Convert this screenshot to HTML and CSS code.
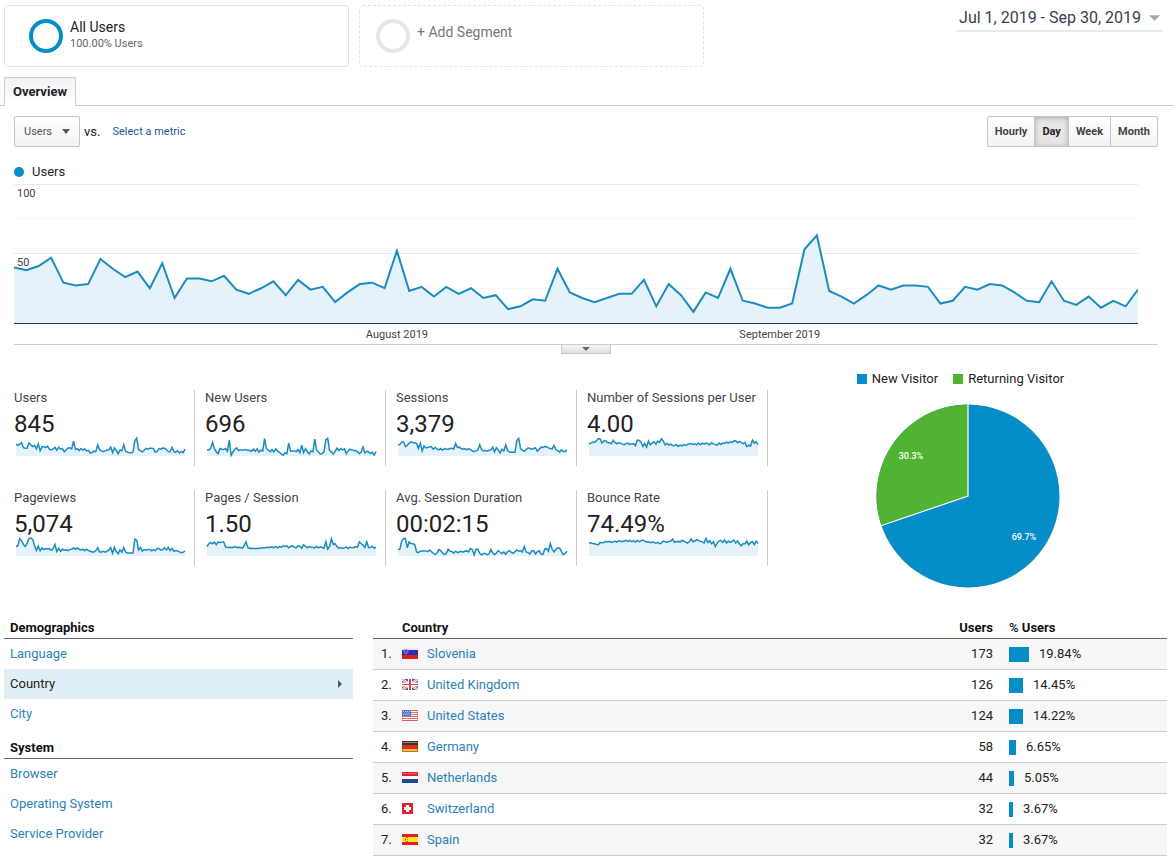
FILE: index.html
```html
<!DOCTYPE html>
<html lang="en">
<head>
<meta charset="utf-8">
<title>Audience Overview</title>
<link rel="stylesheet" href="styles.css">
</head>
<body>
<header class="topbar">
  <button class="segment" type="button">
    <span class="ring"></span>
    <span class="segment-text"><span class="segment-name">All Users</span><span class="segment-share">100.00% Users</span></span>
  </button>
  <button class="segment segment-add" type="button">
    <span class="ring ring-empty"></span>
    <span class="segment-hint">+ Add Segment</span>
  </button>
  <button class="date-range" type="button">Jul 1, 2019 - Sep 30, 2019
    <svg class="date-caret" viewBox="0 0 12 6"><path d="M0 0h12L6 6z"/></svg>
  </button>
</header>

<nav class="tabs"><button class="tab" type="button">Overview</button></nav>

<main>
  <section class="explorer">
    <div class="controls">
      <button class="metric" type="button">Users
        <svg class="metric-caret" viewBox="0 0 8 5"><path d="M0 0h8L4 5z"/></svg>
      </button>
      <span class="versus">vs.</span>
      <a class="metric-link" href="#">Select a metric</a>
      <div class="interval">
        <button type="button">Hourly</button><button type="button" class="active" aria-pressed="true">Day</button><button type="button">Week</button><button type="button">Month</button>
      </div>
    </div>
    <div class="series"><span class="dot"></span>Users</div>
    <div class="chart">
      <svg class="plot" viewBox="0 0 91 100" preserveAspectRatio="none" data-series="users" data-max="100"></svg>
      <span class="y-label y-top">100</span>
      <span class="y-label y-mid">50</span>
      <div class="x-axis">
        <span class="x-label x-aug">August 2019</span>
        <span class="x-label x-sep">September 2019</span>
      </div>
    </div>
    <div class="splitter">
      <button type="button" class="handle" aria-label="Collapse chart"><svg viewBox="0 0 8 4"><path d="M0 0h8L4 4z"/></svg></button>
    </div>
  </section>

  <section class="summary">
    <div class="stats">
      <div class="stat"><span class="stat-name">Users</span><strong>845</strong><svg class="spark" viewBox="0 0 91 53" preserveAspectRatio="none" data-series="users" data-max="63"></svg></div>
      <div class="stat"><span class="stat-name">New Users</span><strong>696</strong><svg class="spark" viewBox="0 0 91 53" preserveAspectRatio="none" data-series="newUsers" data-max="53"></svg></div>
      <div class="stat"><span class="stat-name">Sessions</span><strong>3,379</strong><svg class="spark" viewBox="0 0 91 53" preserveAspectRatio="none" data-series="sessions" data-max="53"></svg></div>
      <div class="stat"><span class="stat-name">Number of Sessions per User</span><strong>4.00</strong><svg class="spark" viewBox="0 0 91 53" preserveAspectRatio="none" data-series="perUser" data-max="53"></svg></div>
      <div class="stat"><span class="stat-name">Pageviews</span><strong>5,074</strong><svg class="spark" viewBox="0 0 91 53" preserveAspectRatio="none" data-series="pageviews" data-max="53"></svg></div>
      <div class="stat"><span class="stat-name">Pages / Session</span><strong>1.50</strong><svg class="spark" viewBox="0 0 91 53" preserveAspectRatio="none" data-series="pages" data-max="53"></svg></div>
      <div class="stat"><span class="stat-name">Avg. Session Duration</span><strong>00:02:15</strong><svg class="spark" viewBox="0 0 91 53" preserveAspectRatio="none" data-series="duration" data-max="53"></svg></div>
      <div class="stat"><span class="stat-name">Bounce Rate</span><strong>74.49%</strong><svg class="spark" viewBox="0 0 91 53" preserveAspectRatio="none" data-series="bounce" data-max="53"></svg></div>
    </div>
    <div class="visitors">
      <div class="pie-legend">
        <span class="key"><i class="swatch swatch-new"></i>New Visitor</span>
        <span class="key"><i class="swatch swatch-returning"></i>Returning Visitor</span>
      </div>
      <svg class="pie" viewBox="0 0 184 184">
        <circle cx="92" cy="92" r="91.5" fill="#058dc7"/>
        <path d="M92 92V.5A91.5 91.5 0 0 0 5.4 121.5Z" fill="#50b432"/>
        <path d="M92 0V92L5 121.700" fill="none" stroke="#fff" stroke-width="1.200"/>
        <text x="35" y="55">30.3%</text>
        <text x="148" y="136">69.7%</text>
      </svg>
    </div>
  </section>

  <section class="reports">
    <nav class="dimensions">
      <h2>Demographics</h2>
      <a href="#">Language</a>
      <a href="#" class="selected">Country<svg viewBox="0 0 4 8"><path d="M0 0l4 4-4 4z"/></svg></a>
      <a href="#">City</a>
      <h2>System</h2>
      <a href="#">Browser</a>
      <a href="#">Operating System</a>
      <a href="#">Service Provider</a>
    </nav>
    <table class="countries">
      <thead><tr><th class="rank"></th><th class="flag"></th><th class="country">Country</th><th class="count">Users</th><th class="share"><span class="percent">%</span> Users</th></tr></thead>
      <tbody>
        <tr><td class="rank">1.</td><td class="flag"><svg viewBox="0 0 16 11"><path fill="#e9e9fb" d="M0 0h16v3H0z"/><path fill="#2b2bbb" d="M0 2h16v5H0z"/><path fill="#e01b22" d="M0 7h16v4H0z"/><path fill="#4a50c8" stroke="#e8a0b0" stroke-width=".6" d="M2 1.500h4v3l-2 1.500-2-1.500z"/></svg></td><td class="country"><a href="#">Slovenia</a></td><td class="count">173</td><td class="share"><span class="meter"><i class="bar" style="width:20px"></i>19.84%</span></td></tr>
        <tr><td class="rank">2.</td><td class="flag"><svg viewBox="0 0 16 11"><path fill="#4a5aa0" d="M0 0h16v11H0z"/><path stroke="#fff" stroke-width="2.400" d="M0 0l16 11M16 0L0 11"/><path stroke="#d8606a" stroke-width=".8" d="M0 0l16 11M16 0L0 11"/><path stroke="#fff" stroke-width="4" d="M8 0v11M0 5.500h16"/><path stroke="#d8404e" stroke-width="2" d="M8 0v11"/><path stroke="#d8404e" d="M0 5.500h16"/></svg></td><td class="country"><a href="#">United Kingdom</a></td><td class="count">126</td><td class="share"><span class="meter"><i class="bar" style="width:14px"></i>14.45%</span></td></tr>
        <tr><td class="rank">3.</td><td class="flag"><svg viewBox="0 0 16 11"><path fill="#fff" d="M0 0h16v11H0z"/><path stroke="#e8696c" stroke-width="1.200" d="M0 .5h16M0 2.500h16M0 4.500h16M0 6.500h16M0 8.500h16M0 10.500h16"/><path fill="#3f78d8" d="M0 0h9v6H0z"/><path stroke="#cfe0ff" stroke-width=".8" stroke-dasharray="1 1" d="M1 1.500h7M2 3h6M1 4.500h7"/><path fill="none" stroke="#c0606a" stroke-opacity=".5" d="M.5.5h15v10H.5z"/></svg></td><td class="country"><a href="#">United States</a></td><td class="count">124</td><td class="share"><span class="meter"><i class="bar" style="width:14px"></i>14.22%</span></td></tr>
        <tr><td class="rank">4.</td><td class="flag"><svg viewBox="0 0 16 11"><path fill="#333" d="M0 0h16v4H0z"/><path fill="#888" d="M1 1h14v1H1z"/><path fill="#e62a22" d="M0 4h16v4H0z"/><path fill="#f8c03a" d="M0 8h16v3H0z"/><path fill="none" stroke="#5e3a12" stroke-opacity=".5" d="M.5.5h15v10H.5z"/></svg></td><td class="country"><a href="#">Germany</a></td><td class="count">58</td><td class="share"><span class="meter"><i class="bar" style="width:7px"></i>6.65%</span></td></tr>
        <tr><td class="rank">5.</td><td class="flag"><svg viewBox="0 0 16 11"><path fill="#e3202a" d="M0 0h16v4H0z"/><path fill="#f4686c" d="M1 1h14v1H1z"/><path fill="#fff" d="M0 4h16v3H0z"/><path fill="#1d4a9a" d="M0 7h16v4H0z"/></svg></td><td class="country"><a href="#">Netherlands</a></td><td class="count">44</td><td class="share"><span class="meter"><i class="bar" style="width:5px"></i>5.05%</span></td></tr>
        <tr><td class="rank">6.</td><td class="flag"><svg viewBox="0 0 16 11"><path fill="#e3202a" d="M0 0h11v11H0z"/><path fill="#fff" d="M4 2h3v2h2v3H7v2H4V7H2V4h2z"/></svg></td><td class="country"><a href="#">Switzerland</a></td><td class="count">32</td><td class="share"><span class="meter"><i class="bar" style="width:4px"></i>3.67%</span></td></tr>
        <tr><td class="rank">7.</td><td class="flag"><svg viewBox="0 0 16 11"><path fill="#e3202a" d="M0 0h16v11H0z"/><path fill="#fbe422" d="M0 3h16v5H0z"/><path fill="#d0702a" d="M4 3h2v1H4zM3 4h1v3H3zM5 5h1v1H5zM4 7h2v1H4z"/></svg></td><td class="country"><a href="#">Spain</a></td><td class="count">32</td><td class="share"><span class="meter"><i class="bar" style="width:4px"></i>3.67%</span></td></tr>
      </tbody>
    </table>
  </section>
</main>
<script src="charts.js"></script>
</body>
</html>
```

FILE: styles.css
```css
* { box-sizing: border-box; }
body { margin: 0; background: #fff; color: #222; font-family: Roboto, "Liberation Sans", sans-serif; font-size: 13px; line-height: 16px; }
button { font: inherit; color: inherit; background: none; border: 0; padding: 0; cursor: pointer; }
a { color: #2a83b8; text-decoration: none; }
svg { display: block; }

.topbar { display: flex; align-items: flex-start; gap: 10px; padding: 5px 11px 0 4px; }
.segment { display: flex; align-items: flex-start; gap: 7px; flex: 0 1 345px; height: 62px; padding: 13px 24px; border: 1px solid #e2e2e2; border-radius: 4px; text-align: left; }
.segment-add { padding: 13px 16px; border-style: dashed; color: #777; }
.ring { flex: none; width: 34px; height: 34px; border: 4px solid #058dc7; border-radius: 50%; }
.ring-empty { border-color: #e6e6e6; }
.segment-text { display: flex; flex-direction: column; }
.segment-name { font-size: 14px; }
.segment-share { font-size: 11px; line-height: 18px; color: #666; }
.segment-hint { font-size: 14px; line-height: 26px; }
.date-range { display: flex; align-items: center; gap: 8px; margin-left: auto; padding: 0 3px; height: 27px; border-bottom: 2px solid #eaeaea; color: #37404a; font-size: 16px; white-space: nowrap; }
.date-caret { width: 11px; height: 6px; fill: #aaa; }

.tabs { display: flex; margin-top: 10px; padding-left: 4px; border-bottom: 1px solid #ccc; }
.tab { height: 29px; margin-bottom: -1px; padding: 0 8px; border: 1px solid #ccc; border-bottom: 0; background: linear-gradient(#f3f3f3, #fff); font-weight: 700; }

.explorer { padding: 10px 16px 0 14px; }
.controls { display: flex; align-items: center; height: 31px; font-size: 11px; }
.metric { display: flex; align-items: center; gap: 10px; height: 31px; padding: 0 9px; border: 1px solid #c6c6c6; border-radius: 2px; background: linear-gradient(#fff, #f3f3f3); color: #555; }
.metric-caret { width: 8px; height: 5px; fill: #555; }
.versus { margin: 0 12px 0 4px; font-size: 13px; }
.metric-link { color: #15599c; }
.interval { display: flex; height: 31px; margin-left: auto; border: 1px solid #c6c6c6; border-radius: 2px; background: linear-gradient(#fff, #f3f3f3); }
.interval button { padding: 0 7px; color: #444; font-weight: 700; }
.interval button + button { border-left: 1px solid #c6c6c6; }
.interval .active { background: #e6e6e6; box-shadow: inset 0 1px 5px #aaa; color: #222; }
.series { display: flex; align-items: center; gap: 8px; margin: 17px 0 4px; }
.dot { width: 10px; height: 10px; border-radius: 50%; background: #058dc7; }

.chart { position: relative; margin-right: 20px; }
.plot { width: 100%; height: 140px; border-bottom: 1px solid #2d3748; }
.line { fill: none; stroke: #1a8dc0; stroke-width: 2; vector-effect: non-scaling-stroke; }
.area { fill: #e6f2fa; }
.grid { stroke: #e8e8e8; vector-effect: non-scaling-stroke; }
.grid-minor { stroke: #f5f5f5; }
.y-label { position: absolute; left: 3px; font-size: 11px; color: #444; }
.y-top { top: 2px; }
.y-mid { top: 71px; }
.x-axis { position: relative; height: 20px; font-size: 11px; color: #444; }
.x-label { position: absolute; top: 3px; transform: translateX(-50%); }
.x-aug { left: 34.07%; }
.x-sep { left: 68.13%; }
.splitter { display: flex; justify-content: center; border-top: 1px solid #ccc; }
.handle { display: flex; justify-content: center; width: 50px; height: 9px; padding-top: 2px; border: 1px solid #c6c6c6; border-top: 0; background: linear-gradient(#f5f5f5, #dedede); }
.handle svg { width: 8px; height: 4px; fill: #666; }

.summary { display: grid; grid-template-columns: 754fr 400fr; padding: 17px 6px 0 14px; }
.stats { display: grid; grid-template-columns: repeat(4, 1fr); gap: 24px 10px; align-content: start; padding-top: 19px; }
.stat { display: flex; flex-direction: column; height: 76px; padding-right: 9px; border-right: 1px solid #ccc; white-space: nowrap; }
.stat-name { color: #444; }
.stat strong { font-size: 24px; line-height: 36px; font-weight: 400; }
.spark { width: 100%; height: 18px; padding-left: 2px; margin-top: -4px; overflow: visible; }
.spark .line { stroke-width: 1.500px; }
.visitors { display: flex; flex-direction: column; align-items: center; gap: 17px; }
.pie-legend { display: flex; gap: 15px; margin-right: 15px; }
.key { display: flex; align-items: center; gap: 5px; }
.swatch { width: 10px; height: 10px; }
.swatch-new { background: #058dc7; }
.swatch-returning { background: #50b432; }
.pie { width: 184px; height: 184px; }
.pie text { fill: #fff; font-size: 9px; font-weight: 500; text-anchor: middle; }

.reports { display: grid; grid-template-columns: 349fr 794fr; gap: 20px; padding: 28px 7px 0 4px; }
.dimensions { display: flex; flex-direction: column; }
.dimensions h2 { margin: 0; height: 30px; padding: 11px 6px 0; border-bottom: 1px solid #666; color: #111; font-size: 13px; line-height: 16px; }
.dimensions h2:first-child { height: 23px; padding-top: 4px; }
.dimensions a { display: flex; align-items: center; justify-content: space-between; height: 30px; padding: 0 11px 0 6px; }
.dimensions .selected { background: #e0eff5; color: #222; }
.dimensions svg { width: 4px; height: 8px; fill: #555; }
.countries { width: 100%; border-collapse: separate; border-spacing: 0; table-layout: fixed; align-self: start; }
.countries th { height: 23px; padding: 4px 0 2px; border-bottom: 1px solid #666; color: #111; text-align: left; }
.countries td { height: 31px; padding: 0; border-bottom: 1px solid #ccc; }
.countries tbody tr:nth-child(odd) { background: #f7f7f7; }
.countries .rank { width: 29px; padding-left: 8px; }
.countries .flag { width: 25px; }
.countries td.flag { padding-bottom: 2px; }
.flag svg { width: 16px; height: 11px; }
.countries .count { width: 100px; text-align: right; }
.countries .share { width: 174px; padding-left: 16px; }
.percent { font-weight: 500; }
.meter { display: flex; align-items: center; gap: 10px; }
.bar { height: 15px; background: #058dc7; }
.countries th.country { overflow: visible; text-indent: -25px; }
```

FILE: charts.js
```js
const series = {
  users: [40,38,41,47,29,27,28,46,39,33,37,25,43,18,32,32,30,34,24,21,25,30,20,31,24,26,15,22,28,29,25,52,23,26,19,26,21,25,18,20,10,12,17,16,39,22,18,15,18,21,21,31,12,28,20,8,22,18,39,16,14,11,11,14,53,63,23,19,14,20,27,24,27,27,26,14,16,26,24,28,27,22,16,15,30,16,13,19,11,16,12,24],
  newUsers: [18,18,23,40,22,12,7,22,20,19,22,14,47,2,12,20,24,16,18,18,18,19,16,17,14,20,14,21,11,17,15,51,21,18,12,19,12,21,14,11,6,2,9,7,38,14,15,15,13,19,10,32,10,22,13,6,15,12,50,18,12,6,7,12,48,52,16,12,6,14,23,16,22,18,21,7,15,20,18,16,16,12,7,11,27,9,14,12,7,11,3,13],
  sessions: [32,34,41,42,28,31,38,42,40,39,37,22,38,15,30,24,25,27,27,20,25,21,18,22,17,22,20,20,22,23,20,37,25,26,22,20,22,18,22,19,15,13,15,17,33,19,15,16,14,17,18,26,12,24,18,9,20,15,33,16,12,11,11,11,46,52,22,17,14,19,24,22,20,22,24,14,20,26,25,28,27,24,22,21,31,19,16,12,18,13,13,18],
  perUser: [36,38,41,40,45,51,50,38,45,44,39,39,36,46,40,36,39,38,35,33,37,38,34,36,36,30,47,46,41,28,37,26,44,33,38,42,35,44,40,51,44,33,37,32,35,31,30,34,28,32,30,33,32,34,36,36,34,36,33,38,33,38,35,38,36,33,39,35,34,32,38,34,38,37,41,38,42,40,44,45,39,43,40,36,40,28,32,29,47,38,42,34],
  pageviews: [28,30,51,45,34,28,38,52,53,49,30,16,29,15,24,19,22,21,21,17,22,34,13,23,14,20,17,18,16,19,20,24,20,24,20,18,20,16,20,16,14,12,12,16,24,12,12,14,11,14,18,25,8,26,13,7,18,11,25,12,9,9,9,9,50,46,18,25,14,19,17,19,19,15,19,16,22,22,18,19,24,18,25,16,22,14,16,15,12,10,11,15],
  pages: [28,36,40,36,41,33,41,40,41,41,27,25,25,26,25,28,25,26,25,23,30,42,25,22,23,22,22,22,23,23,24,24,25,26,25,27,24,28,24,28,26,30,28,30,24,28,30,26,24,30,28,23,33,28,24,28,26,25,24,28,24,27,25,23,42,20,28,51,34,36,27,23,25,22,24,27,22,26,24,25,28,26,42,37,32,25,42,25,25,29,23,26],
  duration: [19,20,44,51,52,24,41,37,36,34,12,10,14,15,15,15,13,17,13,8,4,9,19,16,8,4,7,20,14,13,9,14,10,12,14,11,14,15,12,22,19,3,20,20,8,3,7,7,4,6,19,9,4,9,16,11,7,12,5,13,16,11,8,13,18,14,16,12,28,12,10,6,15,16,6,12,16,6,5,20,22,14,37,20,12,20,24,23,14,4,8,14],
  bounce: [38,39,37,36,34,33,40,39,40,43,41,43,40,41,44,41,45,44,42,44,46,43,46,42,45,41,46,42,45,47,44,41,42,39,41,40,38,40,36,38,44,42,40,43,44,50,40,42,43,41,46,44,41,38,42,50,42,44,48,46,43,42,38,52,40,45,36,42,28,38,44,46,40,47,38,44,40,43,47,38,44,36,30,36,36,44,33,40,42,34,44,37]
};

const NS = "http://www.w3.org/2000/svg";
function add(svg, name, attrs) {
  const el = document.createElementNS(NS, name);
  for (const key in attrs) el.setAttribute(key, attrs[key]);
  svg.appendChild(el);
}

document.querySelectorAll("svg[data-series]").forEach(svg => {
  const values = series[svg.dataset.series];
  const height = svg.viewBox.baseVal.height;
  const last = values.length - 1;
  const points = values
    .map((v, i) => `${i * 91 / last},${height - v * height / svg.dataset.max}`)
    .join(" ");
  if (svg.classList.contains("plot")) {
    [0.4, 25, 50, 75].forEach((y, i) =>
      add(svg, "line", { x1: 0, x2: 91, y1: y, y2: y, class: i % 2 ? "grid grid-minor" : "grid" }));
  }
  add(svg, "polygon", { points: `0,${height} ${points} 91,${height}`, class: "area" });
  add(svg, "polyline", { points, class: "line" });
});
```
